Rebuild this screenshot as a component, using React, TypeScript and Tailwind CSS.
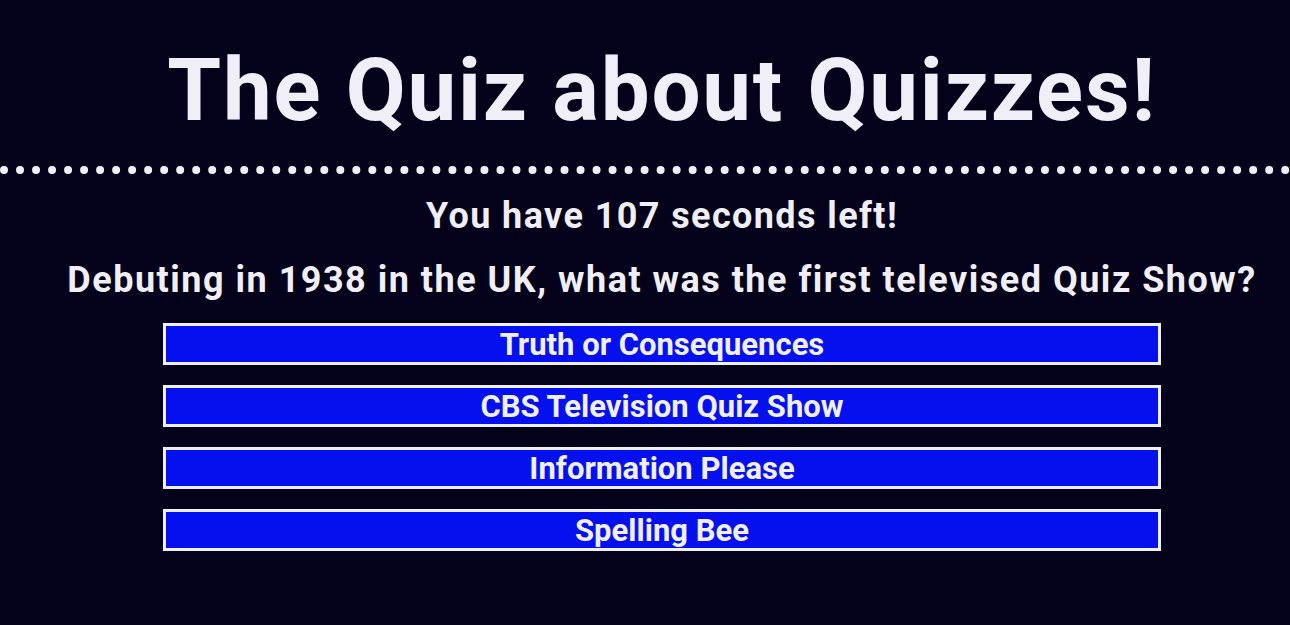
import React from 'react';

const answers = [
  'Truth or Consequences',
  'CBS Television Quiz Show',
  'Information Please',
  'Spelling Bee',
];

const App = () => {
  return (
    <div className="min-h-[625px] w-full bg-[#03021a] text-[#f0eff8] font-['Roboto',sans-serif] overflow-hidden">
      <header className="border-b-[8px] border-dotted border-[#f0eff8] pl-[34px] pt-[40px] pb-[26px]">
        <h1 className="text-center text-[87px] leading-[100px] font-bold tracking-[1.8px]">The Quiz about Quizzes!</h1>
      </header>

      <main className="flex flex-col items-center pl-[34px] pt-[22px]">
        <p className="text-[36px] leading-[40px] font-bold tracking-[1.4px]">You have 107 seconds left!</p>
        <h2 className="mt-[24px] text-[36px] leading-[40px] font-bold tracking-[1.5px] whitespace-nowrap">
          Debuting in 1938 in the UK, what was the first televised Quiz Show?
        </h2>

        <ul className="mt-[23px] flex flex-col gap-[20px] w-[998px]">
          {answers.map((answer) => (
            <li key={answer}>
              <button className="w-full h-[42px] pt-[2px] bg-[#0510ee] border-[3px] border-[#f0eff8] text-[31px] font-bold leading-[34px]">
                {answer}
              </button>
            </li>
          ))}
        </ul>
      </main>
    </div>
  );
};

export default App;
